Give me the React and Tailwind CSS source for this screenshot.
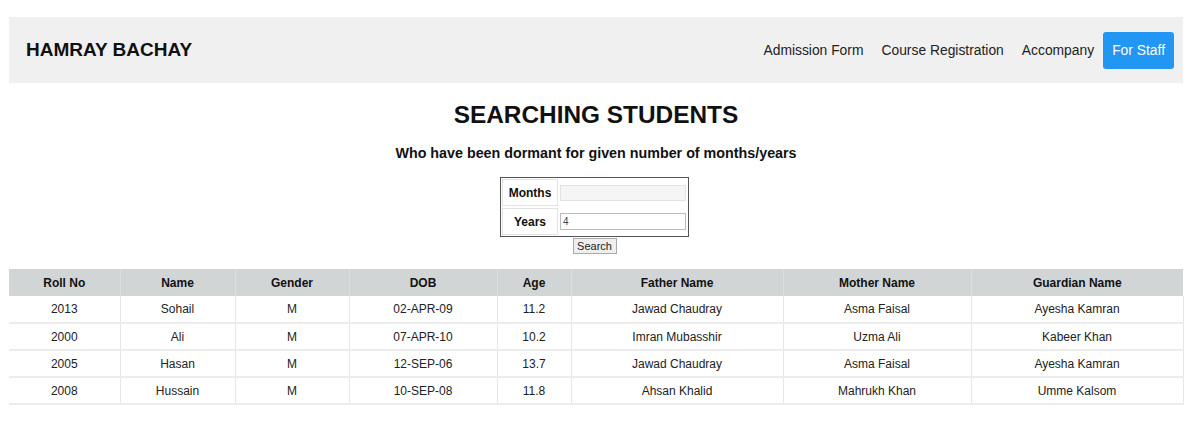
import React from "react";

const rows = [
  ["2013", "Sohail", "M", "02-APR-09", "11.2", "Jawad Chaudray", "Asma Faisal", "Ayesha Kamran"],
  ["2000", "Ali", "M", "07-APR-10", "10.2", "Imran Mubasshir", "Uzma Ali", "Kabeer Khan"],
  ["2005", "Hasan", "M", "12-SEP-06", "13.7", "Jawad Chaudray", "Asma Faisal", "Ayesha Kamran"],
  ["2008", "Hussain", "M", "10-SEP-08", "11.8", "Ahsan Khalid", "Mahrukh Khan", "Umme Kalsom"],
];
const headers = ["Roll No", "Name", "Gender", "DOB", "Age", "Father Name", "Mother Name", "Guardian Name"];
const widths = [111, 115, 114, 148, 74, 212, 188, 212];

export default function App() {
  return (
    <div className="bg-white min-h-[432px] pt-[17px] pl-[9px]" style={{ fontFamily: '"Liberation Sans", Arial, sans-serif' }}>
      <div className="w-[1174px]">
        <nav className="h-[66px] bg-[#f0f0f0] flex items-center justify-between pl-[17px] pr-[9px]">
          <div className="text-[19px] font-bold text-[#111]">HAMRAY BACHAY</div>
          <div className="flex items-center text-[13.85px] text-[#222]">
            <a className="px-[9px]">Admission Form</a>
            <a className="px-[9px]">Course Registration</a>
            <a className="px-[9px]">Accompany</a>
            <a className="h-[37px] px-[9px] flex items-center bg-[#2196f3] text-white rounded-[3px]">For Staff</a>
          </div>
        </nav>

        <h1 className="mt-[18px] text-center text-[24.4px] leading-[28px] font-bold text-[#111]">SEARCHING STUDENTS</h1>
        <h4 className="mt-[15px] text-center text-[14.3px] leading-[18px] font-bold text-[#111]">
          Who have been dormant for given number of months/years
        </h4>

        <div className="mt-[15px] flex flex-col items-center">
          <div className="w-[189px] border border-[#555] p-[1px] flex flex-col gap-[2px] mr-[3px]">
            <div className="flex gap-[2px] h-[27px]">
              <div className="w-[56px] border border-[#e3e3e3] flex items-center justify-center text-[12px] font-bold text-[#111]">Months</div>
              <div className="flex-1 flex items-center">
                <div className="w-[126px] h-[16px] bg-[#f5f5f5] border border-[#e2e2e2]"></div>
              </div>
            </div>
            <div className="flex gap-[2px] h-[27px]">
              <div className="w-[56px] border border-[#e3e3e3] flex items-center justify-center text-[12px] font-bold text-[#111]">Years</div>
              <div className="flex-1 flex items-center">
                <div className="w-[126px] h-[17px] bg-white border border-[#bbb] text-[10px] leading-[15px] pl-[2px] text-[#444]">4</div>
              </div>
            </div>
          </div>
          <button className="mt-[1px] h-[16px] w-[44px] bg-[#efefef] border border-[#aaa] text-[11px] leading-[14px] text-[#222] mr-[3px]">Search</button>
        </div>

        <table className="mt-[15px] w-[1174px] border-collapse table-fixed text-[12px]">
          <colgroup>
            {widths.map((w, i) => (
              <col key={i} style={{ width: w }} />
            ))}
          </colgroup>
          <thead>
            <tr className="bg-[#d1d5d6] h-[27px]">
              {headers.map((h, i) => (
                <th key={i} className="font-bold text-[#111] text-center border-l border-[#dcdfe0] first:border-l-0 p-0">{h}</th>
              ))}
            </tr>
          </thead>
          <tbody>
            {rows.map((r, ri) => (
              <tr key={ri} className="h-[27px] border-b-2 border-[#ececec]">
                {r.map((c, ci) => (
                  <td key={ci} className={"text-center text-[#222] p-0 border-l border-[#e6e6e6] " + (ci === 0 ? "border-l-0" : "") + (ci === 7 ? " border-r" : "")}>{c}</td>
                ))}
              </tr>
            ))}
          </tbody>
        </table>
      </div>
    </div>
  );
}
